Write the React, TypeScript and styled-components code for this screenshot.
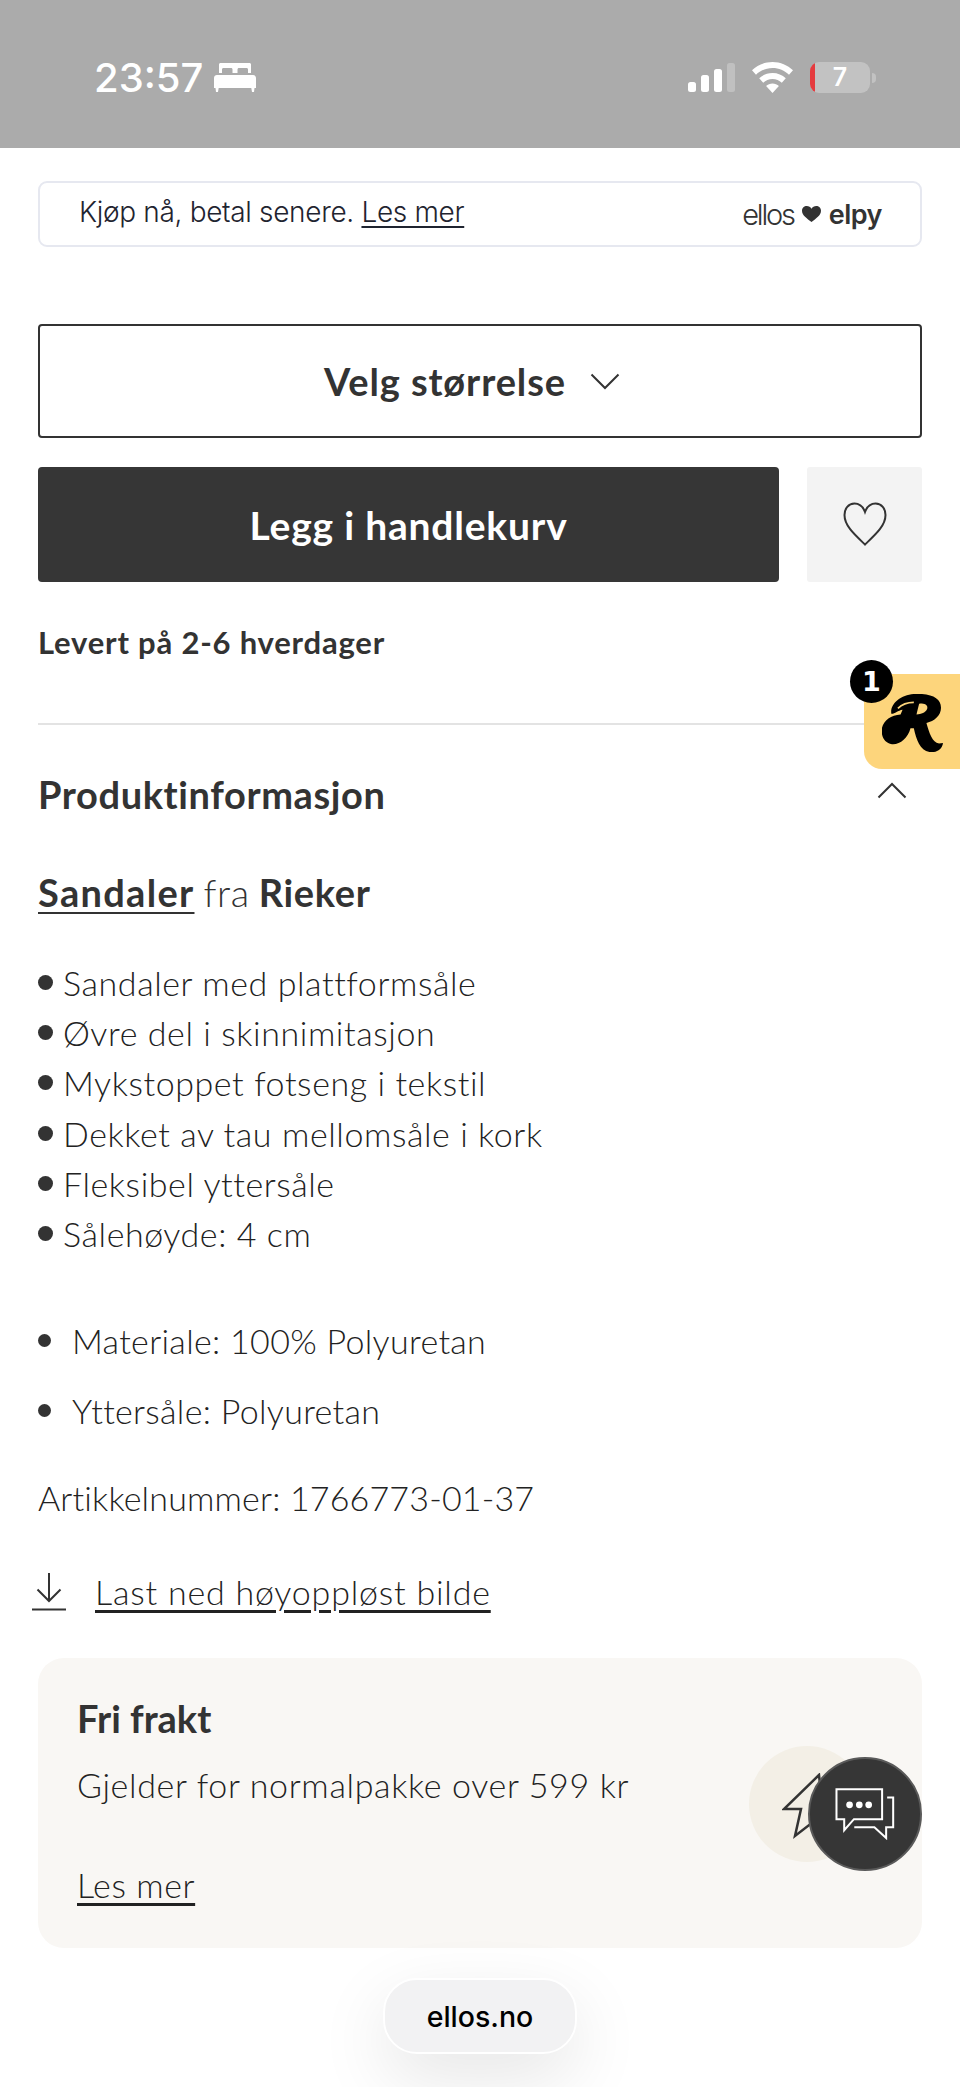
import React from 'react';
import styled, { createGlobalStyle } from 'styled-components';

const GlobalStyle = createGlobalStyle`
  html, body {
    margin: 0;
    padding: 0;
    background: #fff;
  }
  * {
    box-sizing: border-box;
  }
`;

const Page = styled.div`
  position: relative;
  width: 960px;
  height: 2087px;
  overflow: hidden;
  background: #fff;
  color: #333;
  font-family: Lato, 'Noto Sans', sans-serif;
`;

const StatusBar = styled.div`
  height: 148px;
  padding: 62px 84px 0 94px;
  background: #ababab;
  display: flex;
  align-items: flex-start;
  justify-content: space-between;
`;

const StatusLeft = styled.div`
  display: flex;
  align-items: center;
  gap: 11px;
  height: 31px;
`;

const Clock = styled.span`
  color: #fff;
  font-family: Inter, sans-serif;
  font-size: 40px;
  font-weight: 500;
  line-height: 31px;
`;

const StatusRight = styled.div`
  display: flex;
  align-items: center;
  gap: 17px;
  height: 31px;
`;

const Signal = styled.div`
  display: flex;
  align-items: flex-end;
  gap: 5px;
  height: 29px;
`;

const SignalBar = styled.span<{ $h: number; $off?: boolean }>`
  width: 8px;
  height: ${(p) => p.$h}px;
  border-radius: 2.5px;
  background: ${(p) => (p.$off ? 'rgba(255,255,255,0.25)' : '#fff')};
`;

const Battery = styled.div`
  position: relative;
  width: 60px;
  height: 31px;
  border-radius: 9px;
  overflow: hidden;
  background: rgba(255, 255, 255, 0.28);
  color: #fff;
  font-family: Inter, sans-serif;
  font-size: 25px;
  font-weight: 600;
  line-height: 31px;
  text-align: center;
`;

const BatteryLevel = styled.span`
  position: absolute;
  left: 0;
  top: 0;
  bottom: 0;
  width: 5px;
  background: #e53b3f;
`;

const BatteryWrap = styled.div`
  display: flex;
  align-items: center;
  gap: 2px;
`;

const BatteryNub = styled.span`
  width: 4px;
  height: 10px;
  border-radius: 0 4px 4px 0;
  background: rgba(255, 255, 255, 0.28);
`;

const Content = styled.div`
  padding: 0 38px;
`;

const ElpyBox = styled.div`
  margin-top: 33px;
  height: 66px;
  padding: 0 38px 0 39px;
  border: 2.5px solid #e6e8f0;
  border-radius: 9px;
  display: flex;
  align-items: center;
  justify-content: space-between;
  color: #1f2430;
  font-family: Inter, sans-serif;
  font-size: 28px;
  font-weight: 300;
  letter-spacing: -0.33px;
`;

const ElpyCopy = styled.span`
  margin-top: -4px;
`;

const ElpyLink = styled.a`
  text-decoration: underline;
  text-underline-offset: 4px;
`;

const ElpyLogo = styled.div`
  display: flex;
  align-items: center;
  gap: 8px;
  color: #333;
`;

const EllosMark = styled.span`
  font-family: Inter, sans-serif;
  font-size: 29px;
  font-weight: 300;
  letter-spacing: -2.2px;
`;

const ElpyMark = styled.span`
  font-family: Inter, sans-serif;
  font-size: 27px;
  font-weight: 600;
  letter-spacing: -0.5px;
`;

const SizeSelect = styled.div`
  margin-top: 77px;
  height: 114px;
  padding-right: 16px;
  border: 2.5px solid #333;
  border-radius: 4px;
  display: flex;
  align-items: center;
  justify-content: center;
  gap: 24px;
  font-size: 38px;
  font-weight: 700;
  letter-spacing: 0.9px;
`;

const ActionRow = styled.div`
  margin-top: 29px;
  display: grid;
  grid-template-columns: 1fr 115px;
  gap: 28px;
  height: 115px;
`;

const BuyButton = styled.div`
  border-radius: 4px;
  background: #363636;
  color: #fff;
  display: flex;
  align-items: center;
  justify-content: center;
  font-size: 39px;
  font-weight: 700;
  letter-spacing: 0.8px;
`;

const FavButton = styled.div`
  border-radius: 3px;
  background: #f3f3f3;
  display: flex;
  align-items: center;
  justify-content: center;
  padding-bottom: 2px;
`;

const Delivery = styled.div`
  margin-top: 40px;
  font-size: 31px;
  font-weight: 700;
  line-height: 40px;
  letter-spacing: 0.8px;
`;

const Divider = styled.div`
  margin-top: 61px;
  height: 2px;
  background: #e3e3e3;
`;

const AccordionHead = styled.div`
  margin-top: 41px;
  height: 56px;
  display: flex;
  align-items: center;
  justify-content: space-between;
  padding-right: 15px;
  font-size: 38px;
  font-weight: 700;
  letter-spacing: 0.6px;
`;

const ChevronUpWrap = styled.span`
  display: flex;
  margin-bottom: 8px;
`;

const ProductTitle = styled.div`
  margin-top: 45px;
  font-size: 38px;
  font-weight: 300;
  line-height: 50px;
  letter-spacing: 0.65px;
  word-spacing: -2px;
`;

const TitleLink = styled.a`
  font-weight: 700;
  letter-spacing: 1.3px;
  text-decoration: underline;
  text-decoration-thickness: 2px;
  text-underline-offset: 5px;
`;

const TitleBrand = styled.b`
  font-weight: 700;
`;

const Features = styled.div`
  margin-top: 40px;
  display: flex;
  flex-direction: column;
`;

const Feature = styled.div`
  height: 50.3px;
  display: flex;
  align-items: center;
  gap: 10px;
  color: #222;
  font-size: 34px;
  font-weight: 300;
  letter-spacing: 0.58px;
`;

const FeatureDot = styled.span`
  width: 15px;
  height: 15px;
  border-radius: 50%;
  background: #333;
`;

const Specs = styled.ul`
  margin: 57px 0 0;
  padding: 0;
  list-style: none;
  display: flex;
  flex-direction: column;
  gap: 20px;
`;

const Spec = styled.li`
  height: 50px;
  display: flex;
  align-items: center;
  gap: 21px;
  color: #222;
  font-size: 34px;
  font-weight: 300;
  letter-spacing: 0.32px;
`;

const SpecDot = styled.span`
  width: 13px;
  height: 13px;
  border-radius: 50%;
  background: #333;
`;

const ArticleNo = styled.div`
  margin-top: 37px;
  color: #222;
  font-size: 34px;
  font-weight: 300;
  line-height: 50px;
  letter-spacing: 0.17px;
`;

const Download = styled.div`
  margin: 44px 0 0 -6px;
  height: 50px;
  display: flex;
  align-items: center;
  gap: 29px;
  color: #222;
  font-size: 34px;
  font-weight: 300;
  letter-spacing: 0.8px;
`;

const DownloadLink = styled.a`
  text-decoration: underline;
  text-underline-offset: 5px;
`;

const Card = styled.div`
  margin-top: 41px;
  height: 290px;
  padding: 40px 57px 0 39px;
  border-radius: 26px;
  background: #f9f7f4;
  display: flex;
  justify-content: space-between;
`;

const CardText = styled.div`
  display: flex;
  flex-direction: column;
  align-items: flex-start;
`;

const CardTitle = styled.div`
  font-size: 38px;
  font-weight: 700;
  line-height: 40px;
`;

const CardBody = styled.div`
  margin-top: 27px;
  color: #222;
  font-size: 34px;
  font-weight: 300;
  line-height: 40px;
  letter-spacing: 0.65px;
`;

const CardLink = styled.a`
  margin-top: 60px;
  color: #222;
  font-size: 34px;
  font-weight: 300;
  line-height: 40px;
  letter-spacing: 0.58px;
  text-decoration: underline;
  text-underline-offset: 5px;
`;

const BoltCircle = styled.div`
  margin-top: 48px;
  width: 116px;
  height: 116px;
  padding: 22px 0 0 20px;
  border-radius: 50%;
  background: #f3efe6;
  display: flex;
  align-items: center;
  justify-content: center;
`;

const RewardTab = styled.div`
  position: absolute;
  right: 0;
  top: 674px;
  width: 96px;
  height: 95px;
  padding-top: 3px;
  border-radius: 0 0 0 18px;
  background: #fdd57c;
  display: flex;
  align-items: center;
  justify-content: center;
`;

const RewardCount = styled.span`
  position: absolute;
  left: -14px;
  top: -14px;
  width: 43px;
  height: 43px;
  border-radius: 50%;
  background: #000;
  color: #fff;
  display: flex;
  align-items: center;
  justify-content: center;
  font-family: 'DejaVu Sans', sans-serif;
  font-size: 27px;
  font-weight: 700;
`;

const ChatButton = styled.div`
  position: absolute;
  left: 808px;
  top: 1757px;
  width: 114px;
  height: 114px;
  border-radius: 50%;
  border: 2px solid #5a5a5a;
  background: #363636;
  display: flex;
  align-items: center;
  justify-content: center;
`;

const UrlPill = styled.div`
  position: absolute;
  left: 383px;
  top: 1978px;
  width: 194px;
  height: 76px;
  border: 2px solid #fff;
  border-radius: 34px;
  background: #f2f2f3;
  box-shadow: 0 24px 70px rgba(0, 0, 0, 0.1);
  color: #000;
  display: flex;
  align-items: center;
  justify-content: center;
  font-family: Inter, sans-serif;
  font-size: 28.5px;
  font-weight: 500;
`;

const BedIcon = () => (
  <svg width="42" height="29" viewBox="0 0 42 29" fill="#fff">
    <path d="M5 1.500C5 .7 5.700 0 6.500 0h29c.8 0 1.500.7 1.500 1.500V10h-3V6.500c0-1-.7-1.500-1.500-1.500H25c-1 0-1.500.7-1.500 1.500V10h-5V6.500c0-1-.6-1.500-1.500-1.500H9.500C8.600 5 8 5.600 8 6.500V10H5z" />
    <path d="M3 12h36c1.700 0 3 1.300 3 3v10h-1.500l-.5 4h-2l-.7-4H4.700L4 29H2l-.5-4H0V15c0-1.700 1.300-3 3-3z" />
  </svg>
);

const WifiIcon = () => (
  <svg width="41" height="31" viewBox="0 0 41 31" fill="#fff">
    <path d="M20.500 0C28.500 0 35.500 3.200 41 8.300l-4 4.400C32.600 8.600 26.900 6 20.500 6S8.400 8.600 4 12.700L0 8.300C5.500 3.200 12.500 0 20.500 0z" />
    <path d="M20.500 11c5.200 0 9.800 2 13.300 5.300l-4 4.400c-2.400-2.300-5.700-3.700-9.300-3.700s-6.900 1.400-9.300 3.700l-4-4.400C10.700 13 15.300 11 20.500 11z" />
    <path d="M20.500 21.500c2.500 0 4.700.9 6.400 2.500l-6.400 7-6.400-7c1.700-1.600 3.900-2.500 6.400-2.500z" />
  </svg>
);

const Chevron = ({ up }: { up?: boolean }) => (
  <svg width="30" height="17" viewBox="0 0 30 17" fill="none" stroke="#333" strokeWidth="2">
    <path d={up ? 'M1.500 15.500 15 2l13.500 13.500' : 'M1.500 1.500 15 15 28.500 1.500'} />
  </svg>
);

const HeartIcon = () => (
  <svg width="44" height="44" viewBox="0 0 44 44" fill="none" stroke="#333" strokeWidth="2">
    <path d="M22 42.500C12 33 1.500 24 1.500 13C1.500 6.500 5.500 1.500 11.500 1.500c4.500 0 8.500 3 10.500 8.500 2-5.500 6-8.500 10.500-8.500 6 0 10 5 10 11.500 0 11-10.500 20-20.500 29.500z" />
  </svg>
);

const SmallHeart = () => (
  <svg width="19" height="16" viewBox="0 0 19 16" fill="#333">
    <path d="M9.500 16C5 12.500 0 9.500 0 4.800 0 2 2.200 0 4.800 0c2 0 3.700 1 4.700 2.800C10.500 1 12.200 0 14.200 0 16.800 0 19 2 19 4.800c0 4.700-5 7.700-9.500 11.200z" />
  </svg>
);

const DownloadIcon = () => (
  <svg width="34" height="38" viewBox="0 0 34 38" fill="none" stroke="#333" strokeWidth="2">
    <path d="M17 0v28M5.500 16.500 17 28l11.500-11.500M0 36.500h34" />
  </svg>
);

const BoltIcon = () => (
  <svg width="70" height="84" viewBox="0 0 70 84" fill="none" stroke="#333" strokeWidth="2.500">
    <path d="M37 2 2 36h17l-6 27 44-34H40z" />
  </svg>
);

const ChatIcon = () => (
  <svg width="60" height="52" viewBox="345 205 178 155" fill="none" stroke="#fff" strokeWidth="6">
    <path d="M349 209h136v89h-84l-29 33v-33h-23z" />
    <path d="M500 233h18v89h-21v32l-35-32h-60" />
    <circle cx="388" cy="255" r="10" fill="#fff" stroke="none" />
    <circle cx="417" cy="255" r="10" fill="#fff" stroke="none" />
    <circle cx="445" cy="255" r="10" fill="#fff" stroke="none" />
  </svg>
);

const RewardLogo = () => (
  <svg width="61" height="58" viewBox="308 163 184 174">
    <path
      fill="#000"
      d="M336 222C332 188 370 162 414 162C460 162 486 176 486 204C486 228 466 244 442 250C450 278 460 310 480 312L492 310C490 328 474 338 458 338C424 338 412 302 404 266L394 266C386 296 362 316 338 314C318 312 307 294 307 274C307 246 332 226 364 224L370 210C356 212 344 224 336 222Z"
    />
    <path fill="#fdd57c" d="M420 192C438 188 448 198 444 208C440 218 426 224 412 224Z" />
    <path fill="none" stroke="#fdd57c" strokeWidth="5" d="M356 206C368 194 386 188 404 188" />
  </svg>
);

const features = [
  'Sandaler med plattformsåle',
  'Øvre del i skinnimitasjon',
  'Mykstoppet fotseng i tekstil',
  'Dekket av tau mellomsåle i kork',
  'Fleksibel yttersåle',
  'Sålehøyde: 4 cm',
];

const specs = ['Materiale: 100% Polyuretan', 'Yttersåle: Polyuretan'];

const App = () => {
  return (
    <Page>
      <GlobalStyle />
      <StatusBar>
        <StatusLeft>
          <Clock>23:57</Clock>
          <BedIcon />
        </StatusLeft>
        <StatusRight>
          <Signal>
            <SignalBar $h={10} />
            <SignalBar $h={17} />
            <SignalBar $h={23} />
            <SignalBar $h={29} $off />
          </Signal>
          <WifiIcon />
          <BatteryWrap>
            <Battery>
              <BatteryLevel />7
            </Battery>
            <BatteryNub />
          </BatteryWrap>
        </StatusRight>
      </StatusBar>
      <Content>
        <ElpyBox>
          <ElpyCopy>
            Kjøp nå, betal senere. <ElpyLink>Les mer</ElpyLink>
          </ElpyCopy>
          <ElpyLogo>
            <EllosMark>ellos</EllosMark>
            <SmallHeart />
            <ElpyMark>elpy</ElpyMark>
          </ElpyLogo>
        </ElpyBox>
        <SizeSelect>
          Velg størrelse
          <Chevron />
        </SizeSelect>
        <ActionRow>
          <BuyButton>Legg i handlekurv</BuyButton>
          <FavButton>
            <HeartIcon />
          </FavButton>
        </ActionRow>
        <Delivery>Levert på 2-6 hverdager</Delivery>
        <Divider />
        <AccordionHead>
          Produktinformasjon
          <ChevronUpWrap>
            <Chevron up />
          </ChevronUpWrap>
        </AccordionHead>
        <ProductTitle>
          <TitleLink>Sandaler</TitleLink> fra <TitleBrand>Rieker</TitleBrand>
        </ProductTitle>
        <Features>
          {features.map((f) => (
            <Feature key={f}>
              <FeatureDot />
              {f}
            </Feature>
          ))}
        </Features>
        <Specs>
          {specs.map((s) => (
            <Spec key={s}>
              <SpecDot />
              {s}
            </Spec>
          ))}
        </Specs>
        <ArticleNo>Artikkelnummer: 1766773-01-37</ArticleNo>
        <Download>
          <DownloadIcon />
          <DownloadLink>Last ned høyoppløst bilde</DownloadLink>
        </Download>
        <Card>
          <CardText>
            <CardTitle>Fri frakt</CardTitle>
            <CardBody>Gjelder for normalpakke over 599 kr</CardBody>
            <CardLink>Les mer</CardLink>
          </CardText>
          <BoltCircle>
            <BoltIcon />
          </BoltCircle>
        </Card>
      </Content>
      <RewardTab>
        <RewardCount>1</RewardCount>
        <RewardLogo />
      </RewardTab>
      <ChatButton>
        <ChatIcon />
      </ChatButton>
      <UrlPill>ellos.no</UrlPill>
    </Page>
  );
};

export default App;
